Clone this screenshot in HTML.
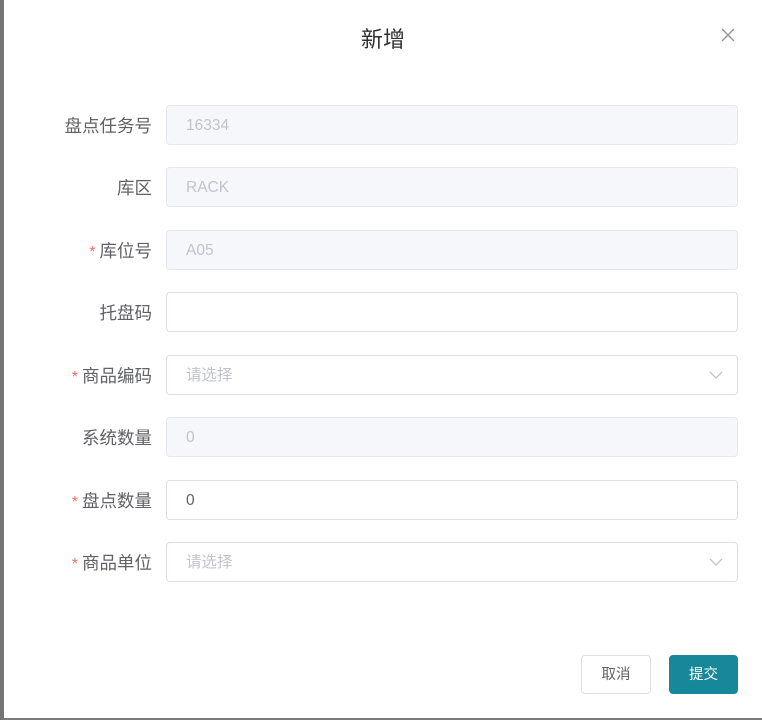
<!DOCTYPE html>
<html><head><meta charset="utf-8"><style>
*{box-sizing:border-box;margin:0;padding:0}
body{width:762px;height:720px;overflow:hidden;background:#7b7b7b;font-family:"Liberation Sans","Noto Sans CJK SC",sans-serif;position:relative}
.strip{position:absolute;left:0;top:0;width:4px;height:720px;background:#747474}
.dlg{position:absolute;left:4px;top:0;width:758px;height:718px;background:#fff}
.title{position:absolute;left:2px;width:762px;top:26px;text-align:center;font-size:22px;color:#303133;line-height:28px}
.x{position:absolute;left:721px;top:28px}
.row{position:absolute;left:0;width:762px;height:40px}
.lab{position:absolute;right:610px;top:1px;line-height:40px;font-size:17.5px;color:#606266;white-space:nowrap}
.lab i{font-style:normal;color:#f56c6c;margin-right:4px;font-size:16px}
.inp{position:absolute;left:166px;width:572px;top:0;height:40px;border:1px solid #dcdfe6;border-radius:4px;padding-left:19px;line-height:40px;font-size:15.5px;color:#606266}
.dis{background:#f5f7fa;border-color:#e4e7ed;color:#c0c4cc}
.ph{color:#c0c4cc}
.arr{position:absolute;right:14px;top:14px}
.btn{position:absolute;top:655px;height:39px;border-radius:4px;font-size:14.5px;line-height:38px;text-align:center}
</style></head><body>
<div class="strip"></div>
<div class="dlg"></div>
<div class="title">新增</div>
<svg class="x" width="14" height="14" viewBox="0 0 14 14"><path d="M1 1L13 13M13 1L1 13" stroke="#909399" stroke-width="1.3"/></svg>

<div class="row" style="top:105px"><span class="lab">盘点任务号</span><div class="inp dis">16334</div></div>
<div class="row" style="top:167px"><span class="lab">库区</span><div class="inp dis">RACK</div></div>
<div class="row" style="top:230px"><span class="lab"><i>*</i>库位号</span><div class="inp dis">A05</div></div>
<div class="row" style="top:292px"><span class="lab">托盘码</span><div class="inp"></div></div>
<div class="row" style="top:355px"><span class="lab"><i>*</i>商品编码</span><div class="inp ph">请选择<svg class="arr" width="14" height="10" viewBox="0 0 14 10"><path d="M1 2L7 8L13 2" stroke="#c0c4cc" stroke-width="1.3" fill="none"/></svg></div></div>
<div class="row" style="top:417px"><span class="lab">系统数量</span><div class="inp dis">0</div></div>
<div class="row" style="top:480px"><span class="lab"><i>*</i>盘点数量</span><div class="inp">0</div></div>
<div class="row" style="top:542px"><span class="lab"><i>*</i>商品单位</span><div class="inp ph">请选择<svg class="arr" width="14" height="10" viewBox="0 0 14 10"><path d="M1 2L7 8L13 2" stroke="#c0c4cc" stroke-width="1.3" fill="none"/></svg></div></div>

<div class="btn" style="left:581px;width:70px;border:1px solid #dcdfe6;color:#606266;background:#fff">取消</div>
<div class="btn" style="left:669px;width:69px;background:#17889a;color:#fff;border:1px solid #17889a">提交</div>
</body></html>
